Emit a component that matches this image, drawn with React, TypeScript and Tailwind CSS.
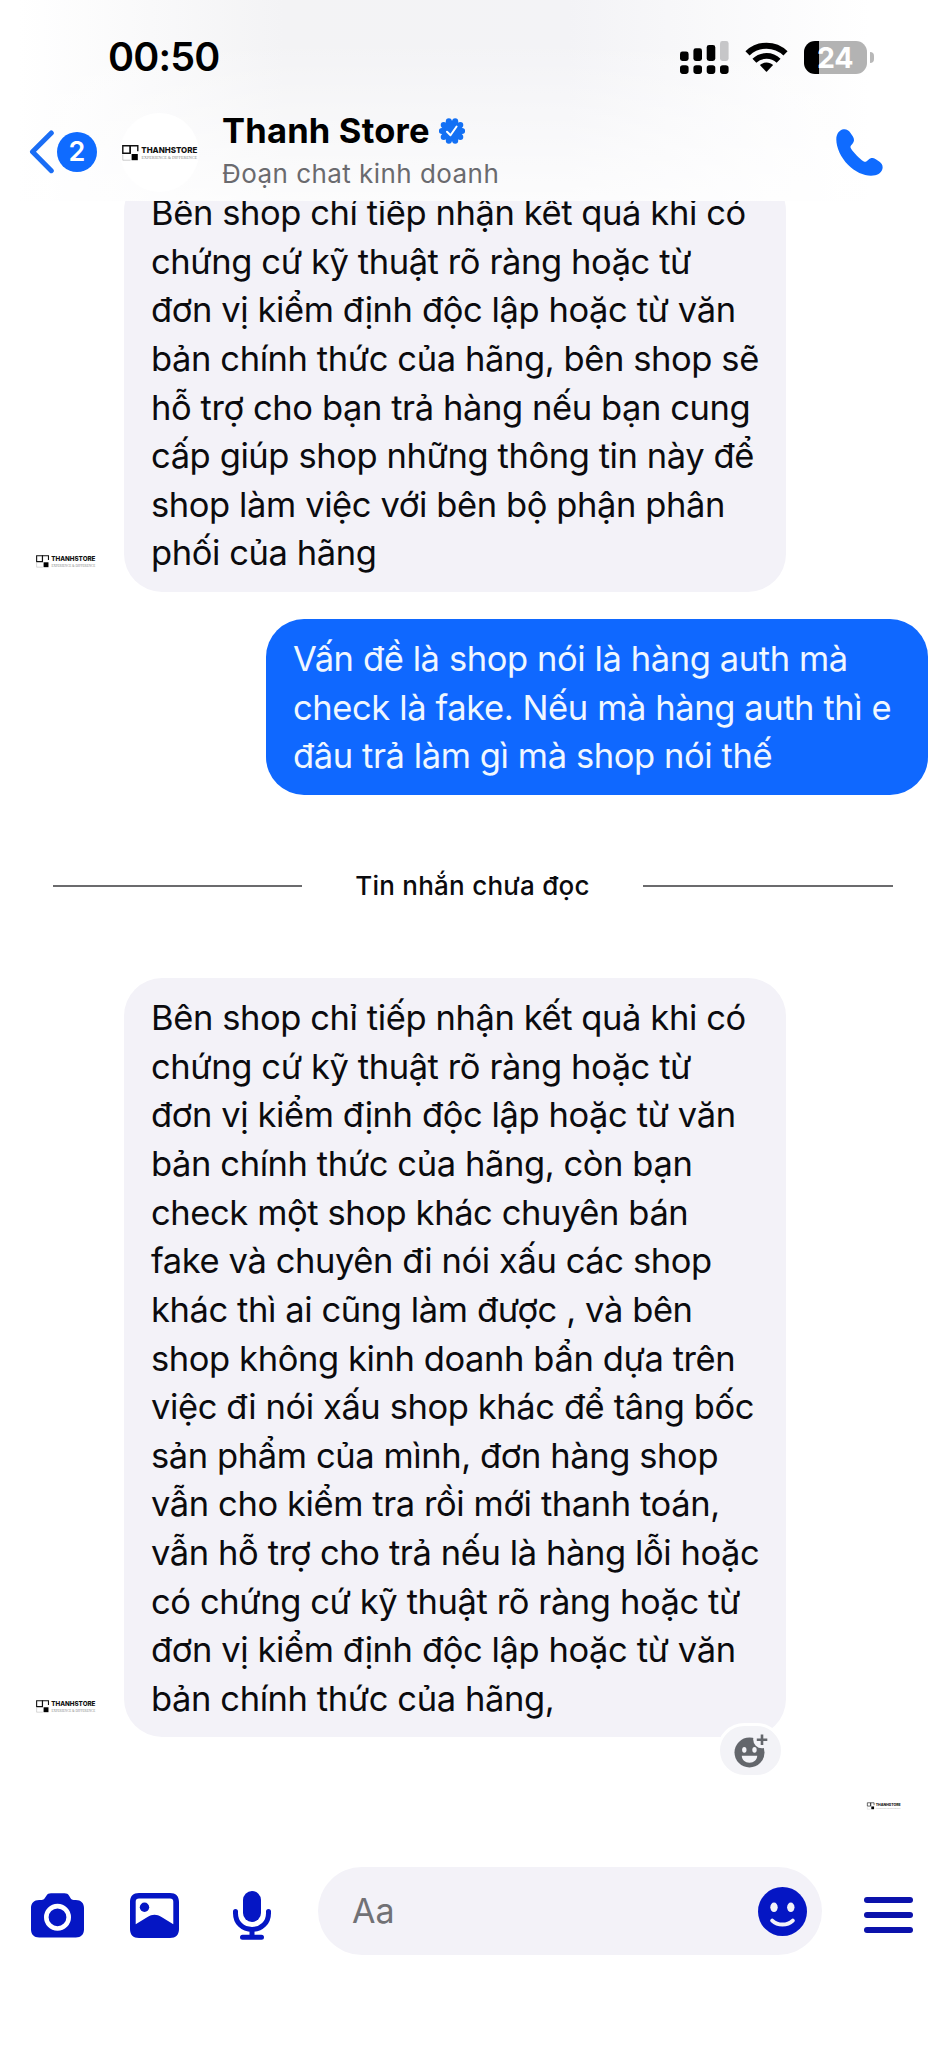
import clsx from 'clsx';

interface Message {
  id: number;
  mine?: boolean;
  reactable?: boolean;
  lines: string[];
}

const readMessages: Message[] = [
  {
    id: 1,
    lines: [
      'Bên shop chỉ tiếp nhận kết quả khi có',
      'chứng cứ kỹ thuật rõ ràng hoặc từ',
      'đơn vị kiểm định độc lập hoặc từ văn',
      'bản chính thức của hãng, bên shop sẽ',
      'hỗ trợ cho bạn trả hàng nếu bạn cung',
      'cấp giúp shop những thông tin này để',
      'shop làm việc với bên bộ phận phân',
      'phối của hãng',
    ],
  },
  {
    id: 2,
    mine: true,
    lines: [
      'Vấn đề là shop nói là hàng auth mà',
      'check là fake. Nếu mà hàng auth thì e',
      'đâu trả làm gì mà shop nói thế',
    ],
  },
];

const unreadMessage: Message = {
  id: 3,
  reactable: true,
  lines: [
    'Bên shop chỉ tiếp nhận kết quả khi có',
    'chứng cứ kỹ thuật rõ ràng hoặc từ',
    'đơn vị kiểm định độc lập hoặc từ văn',
    'bản chính thức của hãng, còn bạn',
    'check một shop khác chuyên bán',
    'fake và chuyên đi nói xấu các shop',
    'khác thì ai cũng làm được , và bên',
    'shop không kinh doanh bẩn dựa trên',
    'việc đi nói xấu shop khác để tâng bốc',
    'sản phẩm của mình, đơn hàng shop',
    'vẫn cho kiểm tra rồi mới thanh toán,',
    'vẫn hỗ trợ cho trả nếu là hàng lỗi hoặc',
    'có chứng cứ kỹ thuật rõ ràng hoặc từ',
    'đơn vị kiểm định độc lập hoặc từ văn',
    'bản chính thức của hãng,',
  ],
};

function StoreLogo({ className }: { className?: string }) {
  return (
    <svg viewBox="0 0 76 16" className={clsx('overflow-visible', className)}>
      <g fill="none" stroke="#111" strokeWidth="1.4">
        <path d="M.8.8h7.4v7.4H.8z" />
        <path d="M8.2 8.2V.8h7.6v5.4" />
      </g>
      <path d="M.8 9.5v5.7h7.8" fill="none" stroke="#aaa" strokeWidth=".6" />
      <path d="M9.6 9h6.2v6.2H9.6z" fill="#000" />
      <text
        x="19.3"
        y="7.7"
        textLength="56"
        lengthAdjust="spacingAndGlyphs"
        fill="#111"
        className="font-[Inter] text-[8px] font-extrabold"
      >
        THANHSTORE
      </text>
      <text
        x="19.5"
        y="14.4"
        textLength="55.5"
        lengthAdjust="spacingAndGlyphs"
        fill="#888"
        className="font-['Liberation_Serif'] text-[4.6px]"
      >
        EXPERIENCE &amp; DIFFERENCE
      </text>
    </svg>
  );
}

function StatusBar() {
  return (
    <div className="flex h-[114px] items-center pl-[108px] pr-[72px]">
      <span className="mt-0.5 text-[39.5px] font-semibold leading-none tracking-[-0.8px] text-black">00:50</span>
      <div className="ml-auto flex items-start gap-4">
        <svg width="49" height="33" viewBox="0 0 49 33">
          <rect x="0" y="10.5" width="8.6" height="9.5" rx="2.4" />
          <rect x="13.4" y="7.3" width="8.6" height="12.7" rx="2.4" />
          <rect x="26.7" y="4" width="8.6" height="16" rx="2.4" />
          <rect x="40" y="0" width="8.6" height="20" rx="2.4" fill="#c6c6c8" />
          <rect x="0" y="24.3" width="8.6" height="8.6" rx="2.8" />
          <rect x="13.4" y="24.3" width="8.6" height="8.6" rx="2.8" />
          <rect x="26.7" y="24.3" width="8.6" height="8.6" rx="2.8" />
          <rect x="40" y="24.3" width="8.6" height="8.6" rx="2.8" />
        </svg>
        <svg width="43" height="33" viewBox="0 0 43 33">
          <path d="M2.5 12.3a27.4 27.4 0 0 1 38 0" fill="none" stroke="#000" strokeWidth="6" />
          <path d="M9.4 19.8a17.4 17.4 0 0 1 24.2 0" fill="none" stroke="#000" strokeWidth="5.6" />
          <path d="M21.5 21.6c-2.6 0-4.8.9-6.6 2.500l6.100 6.400c.3.3.7.3 1 0l6.100-6.400c-1.800-1.600-4-2.500-6.600-2.500z" />
        </svg>
        <div className="flex items-center gap-[3px]">
          <div className="flex h-[33px] w-[63px] items-center rounded-[11px] bg-[linear-gradient(90deg,#000_15px,#b3b3b3_15px)] pl-[13px] text-[28.5px] font-bold leading-[33px] tracking-[-0.3px] text-white">
            24
          </div>
          <div className="h-[11px] w-[4px] rounded-r-full bg-[#b8b8b8]" />
        </div>
      </div>
    </div>
  );
}

function ChatHeader() {
  return (
    <header className="h-[201px] bg-white bg-[linear-gradient(180deg,rgba(255,255,255,0)_20%,rgba(255,255,255,0.75)_100%),linear-gradient(90deg,#ffffff_2%,#f3f3f5_30%,#f3f3f6_60%,#ffffff_92%)]">
      <StatusBar />
      <div className="flex items-start pl-[29px]">
        <svg width="26" height="44" viewBox="0 0 26 44" className="mt-4">
          <path d="M22.3 3 3.5 21.8 22.3 40.7" fill="none" stroke="#1a6df5" strokeWidth="5" strokeLinecap="round" strokeLinejoin="round" />
        </svg>
        <div className="ml-[2px] mt-[18px] flex size-10 items-center justify-center rounded-full bg-[#0f6bff] text-[27px] font-semibold text-white">
          2
        </div>
        <div className="ml-[23px] -mt-px flex size-[79px] items-center justify-center rounded-full bg-white">
          <StoreLogo className="h-4 w-[76px]" />
        </div>
        <div className="ml-[23px]">
          <div className="flex items-center">
            <h1 className="text-[34.5px] font-bold leading-[34px] tracking-[0.2px] text-black">Thanh Store</h1>
            <svg width="26" height="26" viewBox="0 0 26 26" className="ml-[9px]">
              <g fill="#1370f4">
                <circle cx="13" cy="13" r="10.6" />
                <circle cx="16.2" cy="3.2" r="3" />
                <circle cx="21.3" cy="6.900" r="3" />
                <circle cx="23.2" cy="13" r="3" />
                <circle cx="21.3" cy="19.1" r="3" />
                <circle cx="16.2" cy="22.8" r="3" />
                <circle cx="9.8" cy="22.8" r="3" />
                <circle cx="4.7" cy="19.1" r="3" />
                <circle cx="2.8" cy="13" r="3" />
                <circle cx="4.7" cy="6.9" r="3" />
                <circle cx="9.8" cy="3.2" r="3" />
              </g>
              <path d="m8 13.8 3.500 3.500L17.600 8.500" fill="none" stroke="#fff" strokeWidth="2" strokeLinecap="round" strokeLinejoin="round" />
            </svg>
          </div>
          <p className="mt-[10px] text-[26px] leading-[32px] tracking-[0.45px] text-[#6a6a6e]">Đoạn chat kinh doanh</p>
        </div>
        <svg width="47" height="47" viewBox="0 0 47 47" className="ml-auto mr-[63px] mt-[15px]">
          <path
            d="M7.600.3C3.600.8.300 4.600.300 10.500c0 8 4.500 18 11.700 25.200C19 42.700 27.600 46.700 35 46.700c6 0 10.300-2.500 11.400-6.700.8-3.200-.5-5.500-3.200-7.500l-3.400-2.300c-2.900-1.800-5.200-1.500-7.600.7l-1.600 1.300c-1 .8-2 .7-3.200 0-2-1.200-4.300-3.200-6.700-5.700-2.500-2.600-4.400-4.700-5.700-6.900-.7-1.200-.7-2 0-3l1.500-1.800c1.900-2.500 1.900-4.600.4-7.200L14.500 4C12.600 1.200 10.500 0 7.600.300z"
            fill="#0f6bff"
          />
        </svg>
      </div>
    </header>
  );
}

function Bubble({ message, className }: { message: Message; className?: string }) {
  return (
    <div className={clsx('flex items-end', message.mine ? 'justify-end pr-[18px]' : 'pl-9', className)}>
      {!message.mine && <StoreLogo className="mb-6 mr-7 h-[13px] w-[60px]" />}
      <div
        className={clsx(
          'relative w-[662px] whitespace-nowrap rounded-[38px] pb-[13.5px] pl-[27px] pt-[16.5px] text-[34.5px] leading-[48.64px] tracking-[-0.4px]',
          message.mine ? 'bg-[#0f68ff] text-[#f0f7ff]' : 'bg-[#f3f2f8] text-[#0b0b0e]',
        )}
      >
        {message.lines.map((line, i) => (
          <p key={i}>{line}</p>
        ))}
        {message.reactable && (
          <div className="absolute -bottom-[41px] right-[2px] flex h-[55px] w-[67px] items-center justify-center rounded-full border-[3px] border-white bg-[#f3f3f7]">
            <svg width="34" height="34" viewBox="0 0 34 34">
              <circle cx="15.5" cy="18.5" r="15" fill="#63666b" />
              <circle cx="28" cy="5.5" r="8.8" fill="#f3f3f7" />
              <path d="M28 .5v10.5M22.8 5.7h10.5" stroke="#63666b" strokeWidth="2.6" />
              <ellipse cx="10.3" cy="15.8" rx="2.2" ry="2.9" fill="#f3f3f7" />
              <ellipse cx="20.5" cy="15.8" rx="2.2" ry="2.9" fill="#f3f3f7" />
              <path d="M7.8 21.8h15.4c0 4-3.3 6.9-7.7 6.9s-7.7-2.9-7.7-6.9z" fill="#f3f3f7" />
            </svg>
          </div>
        )}
      </div>
    </div>
  );
}

function UnreadDivider() {
  return (
    <div className="mt-[70px] flex h-[42px] items-center justify-between px-[53px]">
      <span className="h-[2px] w-[249px] bg-[#6b6b6d]" />
      <span className="text-[26px] font-medium tracking-[0.25px] text-[#0b0b0e]">Tin nhắn chưa đọc</span>
      <span className="h-[2px] w-[250px] bg-[#6b6b6d]" />
    </div>
  );
}

function Composer() {
  return (
    <footer className="flex h-[88px] items-center pl-[31px]">
      <svg width="53" height="45" viewBox="0 0 53 45" className="mt-[9px]">
        <path
          d="M20 .3h13.5c2.2 0 3.5.7 4.6 2.5l1.5 2.4c.8 1.2 1.6 1.7 3 1.7h2.2c5.2 0 8.2 3 8.2 8.2v21.2c0 5.2-3 8.2-8.2 8.2H8.2C3 44.5 0 41.5 0 36.3V15.1c0-5.2 3-8.2 8.2-8.2h2.5c1.4 0 2.2-.5 3-1.7l1.7-2.4C16.5 1 17.8.3 20 .3z"
          fill="#0516c4"
        />
        <circle cx="26.5" cy="24.3" r="11.2" fill="#0516c4" stroke="#fff" strokeWidth="4.6" />
      </svg>
      <svg width="49" height="45" viewBox="0 0 49 45" className="ml-[46px] mt-[9px]">
        <path
          d="M9 0h31c5.8 0 9 3.2 9 9v27c0 5.8-3.2 9-9 9H9c-5.8 0-9-3.2-9-9V9c0-5.8 3.2-9 9-9zM9 5.4C6.8 5.4 5.7 6.5 5.7 8.7v22.6l11.8-7.4c4.9-2.9 9.1-2.9 14 0l11.8 7.4V8.7c0-2.2-1.1-3.3-3.3-3.3z"
          fill="#0516c4"
          fillRule="evenodd"
        />
        <circle cx="14.5" cy="14.3" r="4.7" fill="#0516c4" />
      </svg>
      <svg width="38" height="49" viewBox="0 0 38 49" className="ml-[54px] mt-[9px]">
        <rect x="10" y="0" width="18" height="31" rx="9" fill="#0516c4" />
        <path d="M2.5 20.5v1.7C2.5 31.6 9.3 38.4 19 38.4s16.5-6.8 16.5-16.2v-1.7M19 38.4v7.8M9.5 46.2h19" fill="none" stroke="#0516c4" strokeWidth="5" strokeLinecap="round" />
      </svg>
      <div className="ml-[47px] flex h-[88px] w-[504px] items-center rounded-full bg-[#f3f2f8] pl-[34px] pr-[15px]">
        <span className="-mt-0.5 text-[34px] text-[#717175]">Aa</span>
        <svg width="49" height="49" viewBox="0 0 49 49" className="ml-auto">
          <circle cx="24.5" cy="24.5" r="24.5" fill="#0516c4" />
          <ellipse cx="16" cy="20.3" rx="3.7" ry="4.8" fill="#f3f2f8" />
          <ellipse cx="32.8" cy="20.3" rx="3.7" ry="4.8" fill="#f3f2f8" />
          <path d="M14.2 33.6c5.6 5.3 15 5.3 20.6 0" fill="none" stroke="#f3f2f8" strokeWidth="4" strokeLinecap="round" />
        </svg>
      </div>
      <div className="ml-[42px] mt-2 flex w-[49px] flex-col gap-[9px]">
        <span className="h-1.5 rounded-full bg-[#0b12ab]" />
        <span className="h-1.5 rounded-full bg-[#0b12ab]" />
        <span className="h-1.5 rounded-full bg-[#0b12ab]" />
      </div>
    </footer>
  );
}

export default function App() {
  return (
    <div className="flex h-[2048px] w-[946px] flex-col overflow-hidden bg-white font-[Inter,sans-serif]">
      <ChatHeader />
      <main className="flex h-[1666px] flex-col overflow-hidden">
        <Bubble message={readMessages[0]} className="-mt-[28.5px]" />
        <Bubble message={readMessages[1]} className="mt-[27px]" />
        <UnreadDivider />
        <Bubble message={unreadMessage} className="mt-[71px]" />
        <StoreLogo className="ml-auto mr-[45px] mt-[65px] h-[8px] w-[34px]" />
      </main>
      <Composer />
    </div>
  );
}
